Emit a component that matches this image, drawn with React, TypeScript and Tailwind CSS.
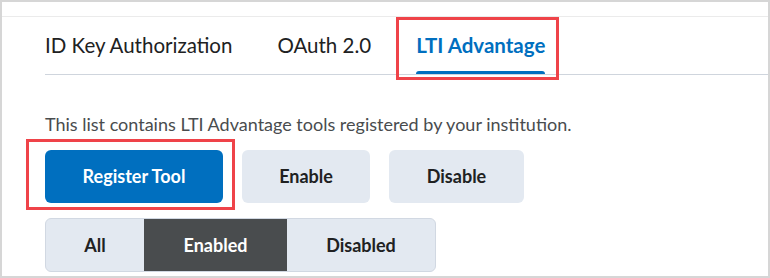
import React from "react";

const font = { fontFamily: "Lato, 'Open Sans', sans-serif" };

function Tab({ label, active }: { label: string; active?: boolean }) {
  return (
    <div className="relative flex flex-col">
      <div
        className={`pt-[16px] pb-[13px] text-[20.5px] leading-[25px] ${
          active ? "font-bold text-[#006fbf]" : "text-[#202122]"
        }`}
      >
        {label}
      </div>
      <div className={`h-[3px] rounded-t-sm ${active ? "bg-[#006fbf]" : "bg-transparent"}`} />
      {active && (
        <div className="pointer-events-none absolute -left-[20px] -right-[14px] top-0 -bottom-[6px] border-[3px] border-[#ef4349]" />
      )}
    </div>
  );
}

export default function App() {
  return (
    <div
      style={font}
      className="h-[278px] w-[770px] overflow-hidden border-2 border-[#d6d6d6] bg-white"
    >
      {/* top strip */}
      <div className="h-[15px] border-b border-[#ebebeb]" />

      {/* tabs */}
      <div className="ml-[43px] flex gap-[45px] border-b border-[#cfd5dd]">
        <Tab label="ID Key Authorization" />
        <Tab label="OAuth 2.0" />
        <Tab label="LTI Advantage" active />
      </div>

      <div className="ml-[43px]">
        <p className="mt-[37px] h-[24px] text-[18px] leading-[24px] text-[#494c4e]">
          This list contains LTI Advantage tools registered by your institution.
        </p>

        {/* action buttons */}
        <div className="mt-[14px] flex gap-[19px]">
          <div className="relative">
            <button className="h-[53px] w-[178px] rounded-[6px] bg-[#006fbf] text-[18px] font-bold text-white">
              Register Tool
            </button>
            <div className="pointer-events-none absolute -left-[19px] -right-[12px] -top-[11px] -bottom-[7px] border-[3px] border-[#ef4349]" />
          </div>
          <button className="h-[53px] w-[128px] rounded-[6px] bg-[#e3e9f1] text-[18px] font-bold text-[#202122]">
            Enable
          </button>
          <button className="h-[53px] w-[135px] rounded-[6px] bg-[#e3e9f1] text-[18px] font-bold text-[#202122]">
            Disable
          </button>
        </div>

        {/* filter segmented control */}
        <div className="mt-[15px] flex h-[54px] w-[391px] overflow-hidden rounded-[6px] border border-[#d1d8e2] bg-[#e3e9f1] text-[18px] font-bold">
          <div className="flex w-[98px] items-center justify-center text-[#202122]">All</div>
          <div className="-my-px flex w-[143px] items-center justify-center bg-[#494c4e] text-white">
            Enabled
          </div>
          <div className="flex flex-1 items-center justify-center text-[#202122]">Disabled</div>
        </div>
      </div>
    </div>
  );
}
